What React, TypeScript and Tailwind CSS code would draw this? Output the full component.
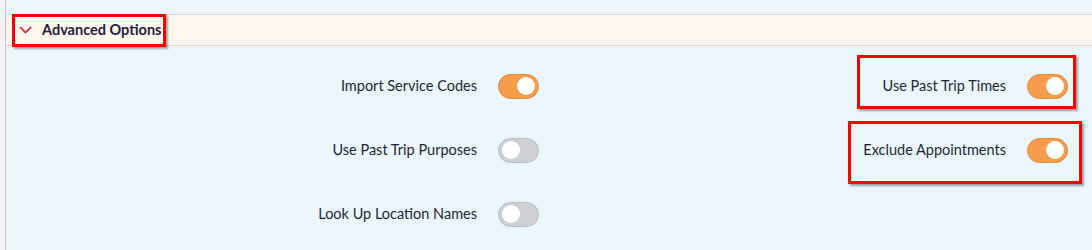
import React from "react";

interface ToggleProps {
  on: boolean;
}

const Toggle = ({ on }: ToggleProps) => {
  return (
    <div
      className={
        on
          ? "flex items-center justify-end w-[41px] h-[25px] rounded-full border border-[#e3893c] bg-[#f79c4a] px-[3px]"
          : "flex items-center justify-start w-[41px] h-[25px] rounded-full border border-[#b9bec5] bg-[#cdd1d6] px-[3px]"
      }
    >
      <div className="w-[18px] h-[18px] rounded-full bg-white" />
    </div>
  );
};

interface OptionProps {
  label: string;
  on: boolean;
}

const Option = ({ label, on }: OptionProps) => {
  return (
    <div className="flex items-center justify-end gap-[21px] h-[64px]">
      <span className="text-[14.5px] text-[#1f1f38]">{label}</span>
      <Toggle on={on} />
    </div>
  );
};

const App = () => {
  return (
    <div
      className="flex w-[1092px] h-[250px] overflow-hidden"
      style={{ fontFamily: "Lato, 'Open Sans', sans-serif" }}
    >
      <div className="w-[6px] h-full bg-[#f2f2f6] border-r border-[#c4c4ca]" />
      <div className="flex-1 h-full bg-[#eaf5fc] pt-[14px]">
        {/* header band */}
        <div className="relative h-[32px] border-y border-[#e2d6ce] bg-[#fff6f0] flex items-center pl-[13px]">
          <svg width="13" height="8" viewBox="0 0 13 8" className="mr-[10px]">
            <path d="M1 1 L6.5 6.5 L12 1" fill="none" stroke="#e0212b" strokeWidth="1.6" />
          </svg>
          <span className="text-[14.5px] font-bold text-[#1f1f38]">Advanced Options</span>
          <div className="absolute left-[6px] -top-[1px] w-[154px] h-[33px] border-[3px] border-[#ff0000] shadow-[2px_2px_2px_rgba(0,0,0,0.35)]" />
        </div>

        <div className="grid grid-cols-[539px_546px] pt-[8px]">
          <div className="flex flex-col pr-[6px]">
            <Option label="Import Service Codes" on={true} />
            <Option label="Use Past Trip Purposes" on={false} />
            <Option label="Look Up Location Names" on={false} />
          </div>
          <div className="flex flex-col pr-[23px]">
            <div className="relative">
              <Option label="Use Past Trip Times" on={true} />
              <div className="absolute left-[312px] top-[1px] w-[219px] h-[54px] border-[3px] border-[#ff0000] shadow-[2px_2px_2px_rgba(0,0,0,0.35)]" />
            </div>
            <div className="relative">
              <Option label="Exclude Appointments" on={true} />
              <div className="absolute left-[303px] top-[3px] w-[234px] h-[63px] border-[3px] border-[#ff0000] shadow-[2px_2px_2px_rgba(0,0,0,0.35)]" />
            </div>
          </div>
        </div>
      </div>
    </div>
  );
};

export default App;
